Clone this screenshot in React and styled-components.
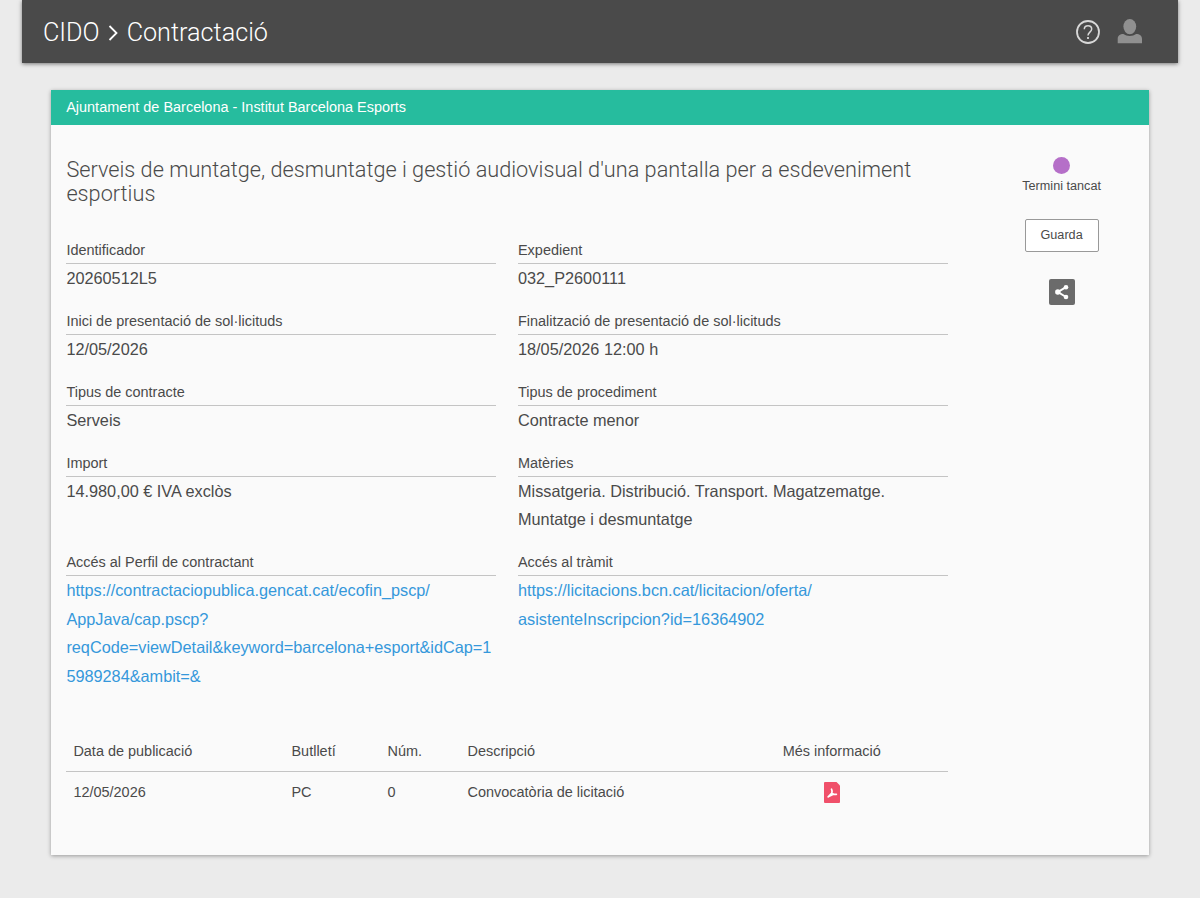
import React from "react";
import styled, { createGlobalStyle } from "styled-components";

const theme = {
  page: "#ebebeb",
  bar: "#4a4a4a",
  card: "#fafafa",
  green: "#26bc9e",
  text: "#4a4a4a",
  line: "#c4c4c4",
  link: "#3598db",
  purple: "#b56fc8",
  red: "#f0506a",
};

const GlobalStyle = createGlobalStyle`
  * {
    box-sizing: border-box;
  }
  body {
    margin: 0;
    background: ${theme.page};
    color: ${theme.text};
    font-family: "Liberation Sans", Arial, sans-serif;
    font-size: 14.46px;
    overflow: hidden;
  }
`;

const Page = styled.div`
  height: 898px;
  padding: 0 22px;
`;

const TopBar = styled.header`
  display: flex;
  align-items: center;
  justify-content: space-between;
  height: 63px;
  padding: 0 36px 0 21px;
  background: ${theme.bar};
  box-shadow: 0 1px 4px rgba(0, 0, 0, 0.5);
`;

const Breadcrumb = styled.div`
  display: flex;
  align-items: center;
  gap: 8px;
  padding-top: 2px;
  color: #fff;
  font-family: Roboto, sans-serif;
  font-weight: 300;
  font-size: 25.2px;
  line-height: 30px;
`;

const TopActions = styled.div`
  display: flex;
  align-items: center;
  gap: 17px;
`;

const Card = styled.main`
  height: 764.2px;
  margin: 27.4px 28.6px 0;
  background: ${theme.card};
  box-shadow: 0 1px 4px rgba(0, 0, 0, 0.35);
`;

const CardHeader = styled.div`
  height: 34.2px;
  padding: 0 15.6px;
  background: ${theme.green};
  color: #fff;
  line-height: 35px;
`;

const CardBody = styled.div`
  display: flex;
  padding: 32px 0 0 15.8px;
`;

const Content = styled.div`
  width: 881.4px;
  padding-top: 1.2px;
`;

const Title = styled.h1`
  height: 48px;
  margin: 0 0 34px;
  font-family: Roboto, sans-serif;
  font-weight: 300;
  font-size: 21.69px;
  line-height: 23.9px;
`;

const Fields = styled.dl`
  display: grid;
  grid-template-columns: 429.6px 430px;
  column-gap: 22px;
  row-gap: 18.5px;
  margin: 0;
`;

const Label = styled.dt`
  height: 24px;
  border-bottom: 1px solid ${theme.line};
  line-height: 21.4px;
`;

const Value = styled.dd`
  margin: 0;
  font-size: 16.27px;
  line-height: 28.5px;
  overflow-wrap: anywhere;
`;

const Link = styled.a`
  color: ${theme.link};
  text-decoration: none;
`;

const Table = styled.table`
  width: 100%;
  margin-top: 40px;
  border-collapse: collapse;
  table-layout: fixed;
`;

const Th = styled.th`
  width: ${(props) => props.$width}px;
  height: 41px;
  padding: 0 7px;
  border-bottom: 1px solid ${theme.line};
  font-weight: normal;
  text-align: ${(props) => props.$align || "left"};
`;

const Td = styled.td`
  height: 40px;
  padding: 0 7px;
  text-align: ${(props) => props.$align || "left"};

  svg {
    display: block;
    margin: 2px auto 0;
  }
`;

const Side = styled.aside`
  display: flex;
  flex: 1;
  flex-direction: column;
  align-items: center;
  padding-left: 26px;
`;

const StatusDot = styled.span`
  width: 17px;
  height: 17px;
  border-radius: 50%;
  background: ${theme.purple};
`;

const StatusText = styled.span`
  margin-top: 4px;
  font-size: 12.65px;
  line-height: 16px;
`;

const SaveButton = styled.button`
  width: 74px;
  height: 33px;
  margin-top: 25px;
  padding: 0;
  border: 1px solid #999;
  border-radius: 2px;
  background: #fff;
  color: ${theme.text};
  font-family: inherit;
  font-size: 12.65px;
`;

const ShareButton = styled.button`
  display: flex;
  align-items: center;
  justify-content: center;
  width: 26px;
  height: 26px;
  margin-top: 27px;
  padding: 0;
  border: 0;
  border-radius: 2px;
  background: #6b6b6b;
`;

const HelpIcon = () => (
  <svg width="24" height="24" viewBox="0 0 24 24" fill="none" stroke="#d8d8d8">
    <circle cx="12" cy="12" r="11" strokeWidth="1.8" />
    <path d="M8.3 9.2c0-2 1.5-3.5 3.7-3.5s3.7 1.4 3.7 3.3c0 3-3.700 3.300-3.700 6.500" strokeWidth="1.5" />
    <path d="M12 17v2" strokeWidth="1.8" />
  </svg>
);

const UserIcon = () => (
  <svg width="25" height="25" viewBox="0 0 25 25" fill="#909090">
    <ellipse cx="12.8" cy="7.6" rx="6.4" ry="7.6" />
    <path d="M.7 24.300v-4.300c0-3.300 2.200-4.900 5.700-4.900 1.800 1.300 3.900 1.900 6.400 1.900s4.500-.6 6.300-1.900c3.600 0 5.900 1.600 5.900 4.900v4.300z" />
  </svg>
);

const ChevronIcon = () => (
  <svg width="11" height="16" viewBox="0 0 11 16" fill="none" stroke="#fff">
    <path d="M1.500 1 8.500 8l-7 7" strokeWidth="1.8" />
  </svg>
);

const ShareIcon = () => (
  <svg width="14" height="16" viewBox="0 0 14 16" fill="#fff" stroke="#fff">
    <path d="M11 3.200 3 8l8 5" fill="none" strokeWidth="2" />
    <circle cx="11" cy="3.200" r="2.300" stroke="none" />
    <circle cx="2.800" cy="8" r="2.700" stroke="none" />
    <circle cx="11" cy="13" r="2.300" stroke="none" />
  </svg>
);

const PdfIcon = () => (
  <svg width="16" height="21" viewBox="0 0 16 21">
    <path d="M1 0h11.500L16 3.500V20a1 1 0 0 1-1 1H1a1 1 0 0 1-1-1V1a1 1 0 0 1 1-1z" fill={theme.red} />
    <path
      d="M7.500 7.200c.7 1.300.7 2.600.3 4L4.200 14.800M7.800 11.200l1.600 1 3 .1M4.200 14.800l5.200-2.600"
      fill="none"
      stroke="#fff"
      strokeWidth="1.700"
      strokeLinecap="round"
      strokeLinejoin="round"
    />
  </svg>
);

// urls are split where they may wrap
const fields = [
  { label: "Identificador", value: "20260512L5" },
  { label: "Expedient", value: "032_P2600111" },
  { label: "Inici de presentació de sol·licituds", value: "12/05/2026" },
  { label: "Finalització de presentació de sol·licituds", value: "18/05/2026 12:00 h" },
  { label: "Tipus de contracte", value: "Serveis" },
  { label: "Tipus de procediment", value: "Contracte menor" },
  { label: "Import", value: "14.980,00 € IVA exclòs" },
  {
    label: "Matèries",
    value: "Missatgeria. Distribució. Transport. Magatzematge. Muntatge i desmuntatge",
  },
  {
    label: "Accés al Perfil de contractant",
    url: [
      "https://contractaciopublica.gencat.cat/ecofin_pscp/",
      "AppJava/cap.pscp?",
      "reqCode=viewDetail&keyword=barcelona+esport&idCap=15989284&ambit=&",
    ],
  },
  {
    label: "Accés al tràmit",
    url: ["https://licitacions.bcn.cat/licitacion/oferta/", "asistenteInscripcion?id=16364902"],
  },
];

const publications = [
  { date: "12/05/2026", bulletin: "PC", number: "0", description: "Convocatòria de licitació" },
];

const UrlLink = ({ parts }) => (
  <Link href={parts.join("")}>
    {parts.map((part, index) => (
      <React.Fragment key={part}>
        {index > 0 && <br />}
        {part}
      </React.Fragment>
    ))}
  </Link>
);

const Field = ({ label, value, url }) => (
  <div>
    <Label>{label}</Label>
    <Value>{url ? <UrlLink parts={url} /> : value}</Value>
  </div>
);

const Publications = ({ rows }) => (
  <Table>
    <thead>
      <tr>
        <Th $width={218}>Data de publicació</Th>
        <Th $width={96}>Butlletí</Th>
        <Th $width={80}>Núm.</Th>
        <Th $width={255}>Descripció</Th>
        <Th $width={232} $align="center">
          Més informació
        </Th>
      </tr>
    </thead>
    <tbody>
      {rows.map((row) => (
        <tr key={row.date}>
          <Td>{row.date}</Td>
          <Td>{row.bulletin}</Td>
          <Td>{row.number}</Td>
          <Td>{row.description}</Td>
          <Td $align="center">
            <PdfIcon />
          </Td>
        </tr>
      ))}
    </tbody>
  </Table>
);

const App = () => {
  return (
    <>
      <GlobalStyle />
      <Page>
        <TopBar>
          <Breadcrumb>
            <span>CIDO</span>
            <ChevronIcon />
            <span>Contractació</span>
          </Breadcrumb>
          <TopActions>
            <HelpIcon />
            <UserIcon />
          </TopActions>
        </TopBar>
        <Card>
          <CardHeader>Ajuntament de Barcelona - Institut Barcelona Esports</CardHeader>
          <CardBody>
            <Content>
              <Title>
                Serveis de muntatge, desmuntatge i gestió audiovisual d'una pantalla per a
                esdeveniment esportius
              </Title>
              <Fields>
                {fields.map((field) => (
                  <Field key={field.label} {...field} />
                ))}
              </Fields>
              <Publications rows={publications} />
            </Content>
            <Side>
              <StatusDot />
              <StatusText>Termini tancat</StatusText>
              <SaveButton>Guarda</SaveButton>
              <ShareButton aria-label="Comparteix">
                <ShareIcon />
              </ShareButton>
            </Side>
          </CardBody>
        </Card>
      </Page>
    </>
  );
};

export default App;
